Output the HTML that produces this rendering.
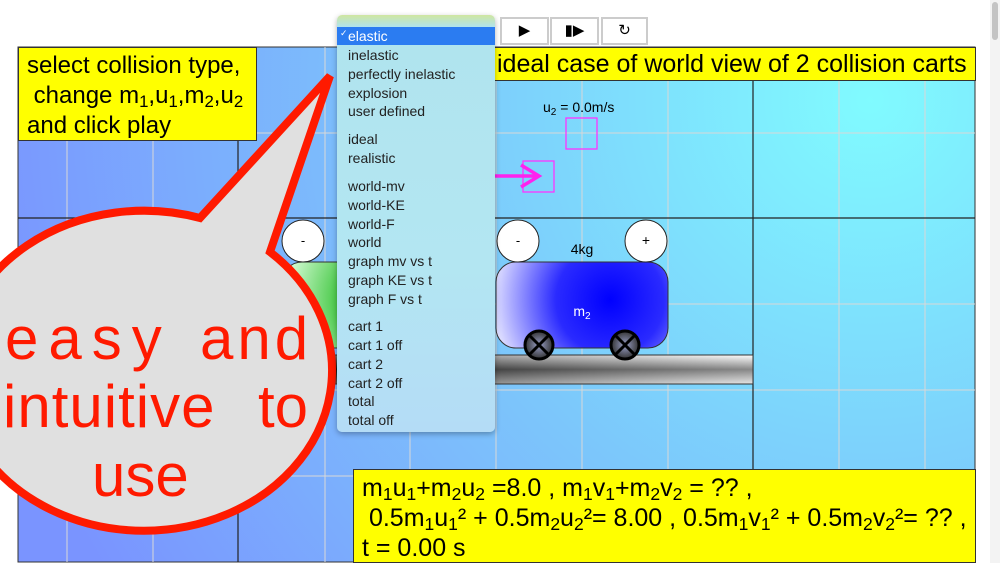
<!DOCTYPE html>
<html><head><meta charset="utf-8"><style>
body{margin:0;width:1000px;height:563px;overflow:hidden;background:#fff;font-family:"Liberation Sans",sans-serif;position:relative}
.abs{position:absolute}
.y{background:#ffff00;border:1px solid #333;box-sizing:border-box;color:#000}
.btn{position:absolute;top:17px;height:28px;width:49px;background:#fff;border:2px solid #ccc;box-sizing:border-box;text-align:center;line-height:24px;font-size:15px}
#dd{left:337px;top:15px;width:158px;height:417px;border-radius:5px;background:linear-gradient(180deg,#cfe6a0 0,#b0e4ee 12px,#b3e6f2 60%,#b4dcf6 100%);box-shadow:0 2px 6px rgba(0,0,0,.3);overflow:hidden;font-size:14px;color:#222}
#dd div{position:absolute;left:11px}
sub{font-size:70%;vertical-align:-4px;line-height:0}
.r{position:absolute;white-space:nowrap}
</style></head><body>
<svg class="abs" style="left:0;top:0" width="1000" height="563">
<defs>
<radialGradient id="bg" cx="870" cy="100" r="900" gradientUnits="userSpaceOnUse"><stop offset="0" stop-color="#80fbff"/><stop offset="0.5" stop-color="#7cc6fb"/><stop offset="1" stop-color="#7a94ff"/></radialGradient>
<radialGradient id="c2" cx="610" cy="300" r="120" gradientUnits="userSpaceOnUse"><stop offset="0" stop-color="#0000ff"/><stop offset="0.45" stop-color="#2a2aff"/><stop offset="1" stop-color="#e8e8ff"/></radialGradient>
<radialGradient id="c1" cx="390" cy="300" r="110" gradientUnits="userSpaceOnUse"><stop offset="0" stop-color="#20b020"/><stop offset="0.5" stop-color="#50cc50"/><stop offset="1" stop-color="#e0ffe0"/></radialGradient>
<linearGradient id="gr" x1="0" y1="355" x2="0" y2="384" gradientUnits="userSpaceOnUse"><stop offset="0" stop-color="#fff"/><stop offset=".5" stop-color="#111"/><stop offset="1" stop-color="#ccc"/></linearGradient>
<linearGradient id="grh" x1="300" x2="753" y1="0" y2="0" gradientUnits="userSpaceOnUse"><stop offset="0" stop-color="#000" stop-opacity=".6"/><stop offset="1" stop-color="#fff" stop-opacity=".5"/></linearGradient>
<radialGradient id="wh"><stop offset="0" stop-color="#9aa0c8"/><stop offset="1" stop-color="#333"/></radialGradient>
</defs>
<rect x="18" y="47" width="957" height="515" fill="url(#bg)" stroke="#333"/>
<g stroke="#d8d8d8" stroke-width="1">
<path d="M67 47V562M153 47V562M325 47V562M410 47V562M496 47V562M582 47V562M668 47V562M839 47V562M925 47V562M18 133H975M18 304H975M18 390H975M18 476H975"/>
</g>
<g stroke="#222" stroke-width="1.2"><path d="M238 47V562M753 47V562M18 218H975"/></g>
<rect x="250" y="355" width="503" height="29" fill="url(#gr)"/>
<rect x="250" y="355" width="503" height="29" fill="url(#grh)" stroke="#333"/>
<rect x="282" y="262" width="172" height="86" rx="20" fill="url(#c1)" stroke="#333"/>
<circle cx="303" cy="241" r="21" fill="#fff" stroke="#222"/><text x="303" y="245" font-size="13" text-anchor="middle">-</text>
<rect x="496" y="262" width="172" height="86" rx="20" fill="url(#c2)" stroke="#333"/>
<circle cx="518" cy="241" r="21" fill="#fff" stroke="#222"/><text x="518" y="245" font-size="13" text-anchor="middle">-</text>
<circle cx="646" cy="241" r="21" fill="#fff" stroke="#222"/><text x="646" y="245" font-size="14" text-anchor="middle">+</text>
<text x="582" y="254" font-size="14" text-anchor="middle">4kg</text>
<text x="582" y="316" font-size="14" fill="#fff" text-anchor="middle">m<tspan font-size="10" dy="3">2</tspan></text>
<g stroke="#000" stroke-width="3"><circle cx="539" cy="345" r="14" fill="url(#wh)"/><path d="M529 335L549 355M549 335L529 355"/><circle cx="625" cy="345" r="14" fill="url(#wh)"/><path d="M615 335L635 355M635 335L615 355"/></g>
<text x="543" y="112" font-size="14">u<tspan font-size="10" dy="3">2</tspan><tspan dy="-3"> = 0.0m/s</tspan></text>
<rect x="566" y="118" width="31" height="31" fill="none" stroke="#ff33ff" stroke-width="1.3"/>
<rect x="523" y="161" width="31" height="31" fill="none" stroke="#ff33ff" stroke-width="1.3"/>
<path d="M490 176H538M521 165L539 176L521 187" stroke="#ff22ee" stroke-width="3.5" fill="none"/>
<path d="M330 76L270 252A188 160 0 1 1 200 218Z" fill="#e0e0e0" stroke="#ff1a00" stroke-width="8" stroke-linejoin="miter"/>
<rect x="990" y="0" width="10" height="563" fill="#f3f3f3"/><rect x="992" y="2" width="6" height="38" rx="3" fill="#c4c4c4"/>
</svg>
<div class="abs" style="left:0;top:305px;width:340px;height:220px;font-size:60px;color:#ff1a00;line-height:67px">
<span class="r" style="left:5px;top:0;letter-spacing:10px">easy</span>
<span class="r" style="left:200px;top:0;letter-spacing:4px">and</span>
<span class="r" style="left:3px;top:68px;letter-spacing:1px">intuitive</span>
<span class="r" style="left:258px;top:68px">to</span>
<span class="r" style="left:92px;top:137px">use</span>
</div>
<div class="abs y" style="left:18px;top:47px;width:239px;height:94px;font-size:24px;line-height:30px;padding:3px 0 0 8px">select collision type,<br>&nbsp;change m<sub>1</sub>,u<sub>1</sub>,m<sub>2</sub>,u<sub>2</sub><br>and click play</div>
<div class="abs y" style="left:470px;top:47px;width:506px;height:34px;font-size:25px;line-height:33px;padding-left:26px;white-space:nowrap">ideal case of world view of 2 collision carts</div>
<div class="abs y" style="left:353px;top:469px;width:623px;height:94px;font-size:25px;line-height:30px;padding:3px 0 0 8px;white-space:nowrap;letter-spacing:0px">m<sub>1</sub>u<sub>1</sub>+m<sub>2</sub>u<sub>2</sub> =8.0 , m<sub>1</sub>v<sub>1</sub>+m<sub>2</sub>v<sub>2</sub> = ?? ,<br>&nbsp;0.5m<sub>1</sub>u<sub>1</sub>² + 0.5m<sub>2</sub>u<sub>2</sub>²= 8.00 , 0.5m<sub>1</sub>v<sub>1</sub>² + 0.5m<sub>2</sub>v<sub>2</sub>²= ?? ,<br>t = 0.00 s</div>
<div class="btn" style="left:500px">▶</div>
<div class="btn" style="left:550px">▮▶</div>
<div class="btn" style="left:601px;width:47px">↻</div>
<div class="abs" id="dd">
<div style="left:0;top:12px;width:158px;height:18px;background:#2b7cf1"></div>
<div style="top:13px;left:3px;color:#fff;font-size:9px">✓</div>
<div style="top:13px;color:#fff">elastic</div>
<div style="top:32px">inelastic</div>
<div style="top:51px">perfectly inelastic</div>
<div style="top:70px">explosion</div>
<div style="top:88px">user defined</div>
<div style="top:116px">ideal</div>
<div style="top:135px">realistic</div>
<div style="top:163px">world-mv</div>
<div style="top:182px">world-KE</div>
<div style="top:201px">world-F</div>
<div style="top:219px">world</div>
<div style="top:238px">graph mv vs t</div>
<div style="top:257px">graph KE vs t</div>
<div style="top:276px">graph F vs t</div>
<div style="top:303px">cart 1</div>
<div style="top:322px">cart 1 off</div>
<div style="top:341px">cart 2</div>
<div style="top:360px">cart 2 off</div>
<div style="top:378px">total</div>
<div style="top:397px">total off</div>
</div>
</body></html>
